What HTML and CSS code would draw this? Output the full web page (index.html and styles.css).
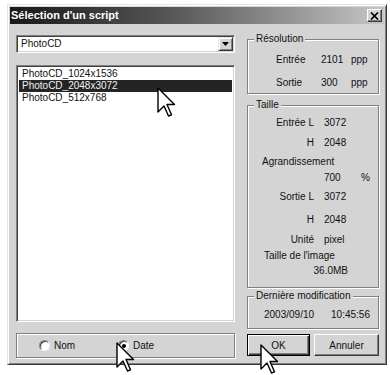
FILE: index.html
```html
<!DOCTYPE html>
<html lang="fr">
<head>
<meta charset="utf-8">
<title>Sélection d'un script</title>
<link rel="stylesheet" href="styles.css">
</head>
<body>
<div class="window">
  <div class="titlebar">
    <span class="title">Sélection d'un script</span>
    <span class="close"><svg width="9" height="8" viewBox="0 0 9 8"><path d="M1 0.5 L8 7.5 M8 0.5 L1 7.5" stroke="#000" stroke-width="1.7" fill="none"/></svg></span>
  </div>
  <div class="content">
    <div class="left">
      <div class="combo">
        <span class="combo-text">PhotoCD</span>
        <span class="combo-btn"><svg width="7" height="4" viewBox="0 0 7 4"><path d="M0 0 H7 L3.5 4 Z" fill="#000"/></svg></span>
      </div>
      <div class="list">
        <div class="item">PhotoCD_1024x1536</div>
        <div class="item selected">PhotoCD_2048x3072</div>
        <div class="item">PhotoCD_512x768</div>
      </div>
      <div class="sortbox">
        <span class="radio"><span class="dot"></span>Nom</span>
        <span class="radio"><span class="dot checked"></span>Date</span>
      </div>
    </div>
    <div class="right">
      <div class="group group-res">
        <span class="legend">Résolution</span>
        <div class="res-grid">
          <span>Entrée</span><span>2101</span><span>ppp</span>
          <span>Sortie</span><span>300</span><span>ppp</span>
        </div>
      </div>
      <div class="group group-taille">
        <span class="legend">Taille</span>
        <div class="taille-grid">
          <span class="lbl">Entrée L</span><span>3072</span><span></span>
          <span class="lbl">H</span><span>2048</span><span></span>
          <span class="full">Agrandissement</span>
          <span></span><span>700</span><span>%</span>
          <span class="lbl">Sortie L</span><span>3072</span><span></span>
          <span class="lbl">H</span><span>2048</span><span></span>
          <span class="lbl">Unité</span><span>pixel</span><span></span>
          <span class="full full2">Taille de l'image</span>
          <span class="size">36.0MB</span><span></span>
        </div>
      </div>
      <div class="group group-mod">
        <span class="legend">Dernière modification</span>
        <div class="mod-row"><span>2003/09/10</span><span>10:45:56</span></div>
      </div>
      <div class="buttons">
        <span class="btn btn-default">OK</span>
        <span class="btn btn-cancel">Annuler</span>
      </div>
    </div>
  </div>
</div>
<svg class="cursor cursor-list" width="19" height="31" viewBox="0 0 19 31"><path d="M1 1 V25 L7 19 L11.5 29 L14.5 27.8 L10 17.5 L17.5 17.5 Z" fill="#fff" stroke="#000" stroke-width="1.4" stroke-linejoin="round"/></svg>
<svg class="cursor cursor-date" width="19" height="31" viewBox="0 0 19 31"><path d="M1 1 V25 L7 19 L11.5 29 L14.5 27.8 L10 17.5 L17.5 17.5 Z" fill="#fff" stroke="#000" stroke-width="1.4" stroke-linejoin="round"/></svg>
<svg class="cursor cursor-ok" width="19" height="31" viewBox="0 0 19 31"><path d="M1 1 V25 L7 19 L11.5 29 L14.5 27.8 L10 17.5 L17.5 17.5 Z" fill="#fff" stroke="#000" stroke-width="1.4" stroke-linejoin="round"/></svg>
</body>
</html>
```
FILE: styles.css
```css
* { box-sizing: border-box; }

body {
  margin: 0;
  width: 390px;
  height: 375px;
  overflow: hidden;
  position: relative;
  background: #fff;
  font-family: "Liberation Sans", Arial, sans-serif;
  font-size: 10px;
  color: #111;
}

.window {
  margin: 4px 0 0 7px;
  width: 380px;
  height: 361px;
  background: #d4d4d4;
  border: 1px solid;
  border-color: #e4e4e4 #3a3a3a #3a3a3a #e4e4e4;
  box-shadow: inset 1px 1px 0 #fff, inset -1px -1px 0 #808080;
  padding: 2px;
  display: flex;
  flex-direction: column;
}

.titlebar {
  height: 17px;
  background: linear-gradient(90deg, #181818 0%, #5a5a5a 45%, #c6c6c6 100%);
  display: flex;
  align-items: center;
  justify-content: space-between;
  padding: 0 2px 0 1px;
}

.title {
  color: #fff;
  font-weight: bold;
  font-size: 11px;
  line-height: 13px;
}

.close {
  width: 15px;
  height: 13px;
  background: #d4d4d4;
  border: 1px solid;
  border-color: #fff #3a3a3a #3a3a3a #fff;
  box-shadow: inset -1px -1px 0 #808080;
  display: flex;
  align-items: center;
  justify-content: center;
}

.content {
  flex: 1;
  display: flex;
  gap: 12px;
  padding: 11px 5px 0 6px;
}

.left {
  width: 219px;
  display: flex;
  flex-direction: column;
}

.right {
  width: 132px;
  display: flex;
  flex-direction: column;
  padding-top: 4px;
}

.sunken {
  border: 1px solid;
}

.combo {
  height: 18px;
  background: #fff;
  border: 1px solid;
  border-color: #808080 #fff #fff #808080;
  box-shadow: inset 1px 1px 0 #404040, inset -1px -1px 0 #d4d4d4;
  padding: 1px;
  display: flex;
  align-items: stretch;
}

.combo-text {
  flex: 1;
  padding-left: 3px;
  line-height: 14px;
}

.combo-btn {
  width: 15px;
  background: #d4d4d4;
  border: 1px solid;
  border-color: #e8e8e8 #3a3a3a #3a3a3a #e8e8e8;
  box-shadow: inset 1px 1px 0 #fff, inset -1px -1px 0 #808080;
  display: flex;
  align-items: center;
  justify-content: center;
}

.list {
  margin-top: 12px;
  height: 257px;
  background: #fff;
  border: 1px solid;
  border-color: #808080 #fff #fff #808080;
  box-shadow: inset 1px 1px 0 #404040, inset -1px -1px 0 #d4d4d4;
  padding: 2px 2px;
}

.item {
  height: 12px;
  line-height: 12px;
  padding-left: 3px;
  white-space: nowrap;
}

.item.selected {
  background: #242424;
  color: #f2f2f2;
}

.sortbox {
  margin-top: 11px;
  height: 25px;
  border: 1px solid #808080;
  box-shadow: inset 1px 1px 0 #fff, 1px 1px 0 #fff;
  display: flex;
  align-items: center;
  padding-left: 22px;
}

.radio {
  display: flex;
  align-items: center;
  gap: 4px;
  width: 79px;
}

.dot {
  width: 11px;
  height: 11px;
  border-radius: 50%;
  background: #fff;
  border: 1px solid;
  border-color: #808080 #f4f4f4 #f4f4f4 #808080;
  box-shadow: inset 1px 1px 0 #404040;
  display: flex;
  align-items: center;
  justify-content: center;
}

.dot.checked::after {
  content: "";
  width: 4px;
  height: 4px;
  border-radius: 50%;
  background: #000;
}

.group {
  border: 1px solid #808080;
  box-shadow: inset 1px 1px 0 #fff, 1px 1px 0 #fff;
  display: flex;
  flex-direction: column;
  align-items: flex-start;
}

.legend {
  display: block;
  margin: -7px 0 0 6px;
  padding: 0 2px;
  line-height: 12px;
  height: 12px;
  background: #d4d4d4;
}

.group-res { height: 55px; }
.group-taille { height: 183px; margin-top: 11px; }
.group-mod { height: 33px; margin-top: 8px; }

.res-grid {
  margin-top: 8px;
  padding-left: 28px;
  display: grid;
  grid-template-columns: 45px 30px auto;
  grid-auto-rows: 14px;
  row-gap: 9px;
  align-items: center;
  line-height: 14px;
}

.taille-grid {
  margin-top: 1px;
  display: grid;
  grid-template-columns: 66px 27px auto;
  grid-template-rows: 20px 20px 18px 14px 24px 22px 18px 15px 15px;
  column-gap: 10px;
  align-items: center;
  line-height: 13px;
}

.taille-grid .lbl { text-align: right; }

.taille-grid .full {
  grid-column: 1 / 4;
  padding-left: 14px;
}

.taille-grid .full2 { padding-left: 16px; }

.taille-grid .size {
  grid-column: 1 / 3;
  text-align: right;
  padding-right: 3px;
}

.mod-row {
  margin-top: 6px;
  padding-left: 16px;
  display: flex;
  gap: 17px;
  line-height: 14px;
}

.buttons {
  margin-top: 5px;
  display: flex;
  gap: 4px;
}

.btn {
  height: 22px;
  display: flex;
  align-items: center;
  justify-content: center;
  background: #d4d4d4;
  border: 1px solid;
  border-color: #fff #3a3a3a #3a3a3a #fff;
  box-shadow: inset -1px -1px 0 #808080;
}

.btn-default {
  width: 63px;
  border-color: #000;
  box-shadow: inset 1px 1px 0 #fff, inset -1px -1px 0 #3a3a3a, inset -2px -2px 0 #808080;
}

.btn-cancel { width: 65px; }

.cursor {
  position: absolute;
}

.cursor-list { left: 157px; top: 87px; }
.cursor-date { left: 116px; top: 342px; }
.cursor-ok { left: 260px; top: 344px; }
```
